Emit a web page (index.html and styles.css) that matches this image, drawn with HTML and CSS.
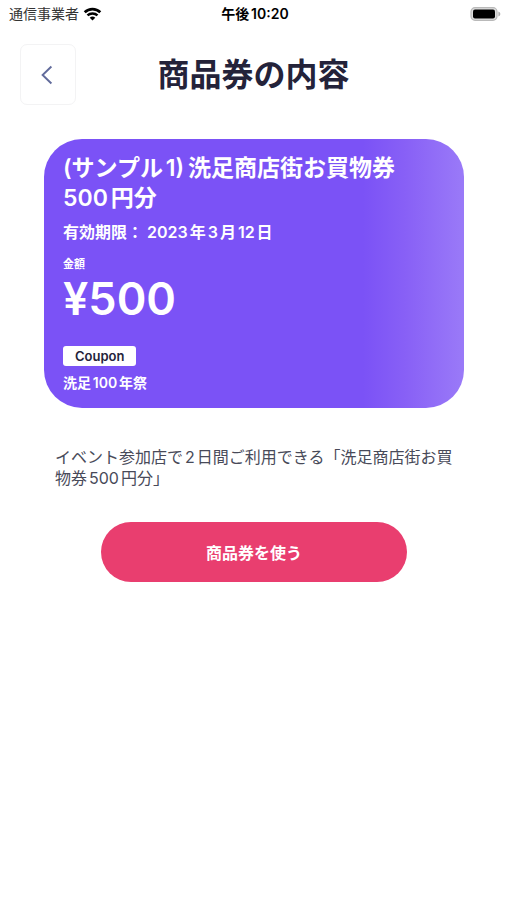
FILE: index.html
```html
<!DOCTYPE html>
<html lang="ja">
<head>
<meta charset="utf-8">
<meta name="viewport" content="width=device-width, initial-scale=1">
<title>商品券の内容</title>
<link rel="stylesheet" href="styles.css">
</head>
<body>
<div class="status">
  <div class="carrier">
    <span>通信事業者</span>
    <svg class="wifi" viewBox="0 0 18 14" aria-hidden="true">
      <path d="M1.2 5.2 A11.2 11.2 0 0 1 16.8 5.2" fill="none" stroke="#000" stroke-width="2.7"/>
      <path d="M4 8.4 A7.2 7.2 0 0 1 14 8.4" fill="none" stroke="#000" stroke-width="2.5"/>
      <path d="M9 13.6 L6.2 10.8 A4 4 0 0 1 11.8 10.8 Z"/>
    </svg>
  </div>
  <time class="clock">午後10:20</time>
  <svg class="battery" viewBox="0 0 31 14" aria-hidden="true">
    <rect x="1" y="0.7" width="26" height="12.6" rx="4" fill="#dedede" stroke="#b9b9b9" stroke-width="1.2"/>
    <rect x="3" y="2.5" width="22" height="9" rx="2"/>
    <path d="M28.4 4.6 Q30.4 5.2 30.4 7 Q30.4 8.8 28.4 9.4 Z" fill="#b0b0b0"/>
  </svg>
</div>
<header class="header">
  <button class="back" type="button" aria-label="戻る">
    <svg viewBox="0 0 12 20" aria-hidden="true"><path d="M10.4 1.5 L1.6 10 L10.4 18.5" fill="none" stroke="#616b9b" stroke-width="1.9"/></svg>
  </button>
  <h1>商品券の内容</h1>
</header>
<main>
  <section class="card">
    <h2>(サンプル1)&thinsp;洗足商店街お買物券500円分</h2>
    <p class="expiry">有効期限： 2023年3月12日</p>
    <p class="label">金額</p>
    <p class="amount">¥500</p>
    <span class="tag">Coupon</span>
    <p class="event">洗足100年祭</p>
  </section>
  <p class="description">イベント参加店で2日間ご利用できる「洗足商店街お買物券500円分」</p>
  <button class="use" type="button">商品券を使う</button>
</main>
</body>
</html>
```

FILE: styles.css
```css
* {
  box-sizing: border-box;
}

body {
  margin: 0;
  background: #fff;
  color: #24233a;
  font-family: Inter, "Noto Sans CJK JP", sans-serif;
  text-autospace: normal;
}

h1,
h2,
p {
  margin: 0;
}

button {
  padding: 0;
  border: 0;
  font-family: inherit;
  cursor: pointer;
}

.status {
  display: grid;
  grid-template-columns: 1fr auto 1fr;
  align-items: center;
  height: 28px;
  padding: 0 6px 0 9px;
  color: #000;
  font-size: 14px;
  line-height: 20px;
}

.carrier {
  display: flex;
  align-items: center;
  gap: 4px;
  color: #333;
}

.wifi {
  width: 19px;
  height: 14px;
}

.clock {
  font-weight: 600;
}

.battery {
  justify-self: end;
  width: 31px;
  height: 14px;
}

.header {
  display: grid;
  grid-template-columns: 56px 1fr 56px;
  align-items: center;
  padding: 16px 20px 0;
}

.back {
  display: flex;
  align-items: center;
  justify-content: center;
  height: 61px;
  padding-right: 2px;
  border: 1px solid #f3f3f4;
  border-radius: 7px;
  background: #fff;
}

.back svg {
  width: 12px;
  height: 20px;
}

h1 {
  font-size: 32px;
  font-weight: 600;
  line-height: 40px;
  text-align: center;
}

main {
  display: flex;
  flex-direction: column;
  padding: 34px 43px 0 44px;
}

.card {
  display: flex;
  flex-direction: column;
  align-items: flex-start;
  padding: 14px 60px 15px 19px;
  border-radius: 38px;
  background: linear-gradient(90deg, #7b52f6 0%, #7b52f6 76%, #8860f6 86%, #9a7af8 100%);
  color: #fff;
}

h2 {
  font-size: 23px;
  font-weight: 600;
  line-height: 30px;
}

.expiry {
  margin-top: 7px;
  font-size: 16px;
  font-weight: 600;
  line-height: 24px;
}

.label {
  margin-top: 12px;
  font-size: 11px;
  font-weight: 600;
  line-height: 16px;
}

.amount {
  margin-top: 2px;
  font-size: 45px;
  font-weight: 600;
  line-height: 50px;
}

.tag {
  margin-top: 22px;
  padding: 0 12px;
  border-radius: 3px;
  background: #fff;
  color: #24233a;
  font-size: 13px;
  font-weight: 600;
  line-height: 20px;
}

.event {
  margin-top: 7px;
  font-size: 14px;
  font-weight: 600;
  line-height: 20px;
}

.description {
  margin: 39px 8px 0 11px;
  color: #484a59;
  font-size: 16px;
  line-height: 21px;
}

.use {
  align-self: center;
  width: 73%;
  height: 60px;
  margin-top: 33px;
  border-radius: 30px;
  background: #e93e6f;
  color: #fff;
  font-size: 16px;
  font-weight: 600;
}
```
